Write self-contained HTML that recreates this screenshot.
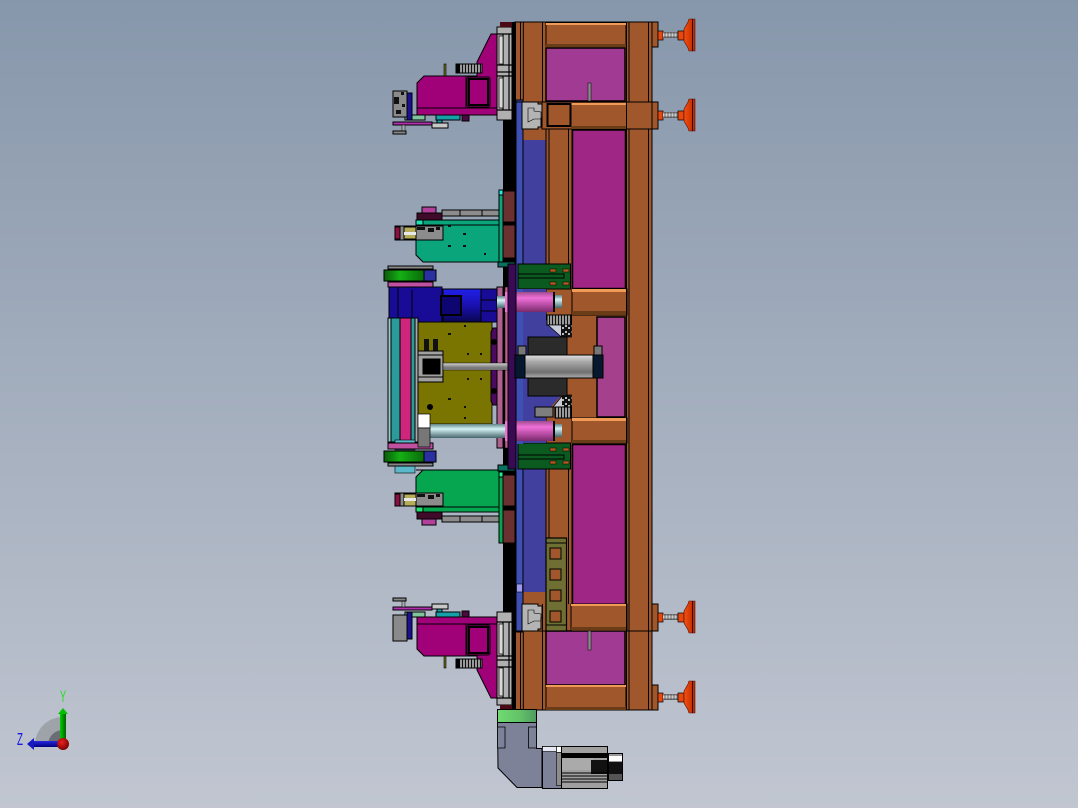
<!DOCTYPE html>
<html><head><meta charset="utf-8"><style>
html,body{margin:0;padding:0;width:1078px;height:808px;overflow:hidden}
svg{display:block}
</style></head><body>
<svg width="1078" height="808" viewBox="0 0 1078 808" xmlns="http://www.w3.org/2000/svg" font-family="Liberation Sans, sans-serif">
<defs>
<linearGradient id="bg" x1="0" y1="0" x2="0" y2="1"><stop offset="0" stop-color="#8797ab"/><stop offset="1" stop-color="#c1c6d1"/></linearGradient>
<linearGradient id="pink" x1="0" y1="0" x2="0" y2="1"><stop offset="0" stop-color="#a04c90"/><stop offset=".3" stop-color="#f070d8"/><stop offset="1" stop-color="#7a2a6c"/></linearGradient>
<linearGradient id="cy" x1="0" y1="0" x2="0" y2="1"><stop offset="0" stop-color="#5f8486"/><stop offset=".35" stop-color="#d4f2f4"/><stop offset="1" stop-color="#46666c"/></linearGradient>
<linearGradient id="blu" x1="0" y1="0" x2="0" y2="1"><stop offset="0" stop-color="#2020e8"/><stop offset=".5" stop-color="#1a10b0"/><stop offset="1" stop-color="#0a0650"/></linearGradient>
<linearGradient id="gry" x1="0" y1="0" x2="0" y2="1"><stop offset="0" stop-color="#e0e0e0"/><stop offset=".3" stop-color="#a8a8a8"/><stop offset=".75" stop-color="#707070"/><stop offset="1" stop-color="#b0b0b0"/></linearGradient>
<linearGradient id="grn" x1="0" y1="0" x2="1" y2="0"><stop offset="0" stop-color="#0a5a0a"/><stop offset=".4" stop-color="#14b014"/><stop offset="1" stop-color="#0a6a0a"/></linearGradient>
<linearGradient id="grb" x1="0" y1="0" x2="1" y2="0"><stop offset="0" stop-color="#6fdc72"/><stop offset=".6" stop-color="#62c068"/><stop offset="1" stop-color="#4f9a60"/></linearGradient>
<linearGradient id="footg" x1="0" y1="0" x2="1" y2="0"><stop offset="0" stop-color="#f4500f"/><stop offset="1" stop-color="#b82800"/></linearGradient>
<linearGradient id="thr" x1="0" y1="0" x2="0" y2="1"><stop offset="0" stop-color="#666"/><stop offset=".5" stop-color="#e4e4e4"/><stop offset="1" stop-color="#555"/></linearGradient>
<linearGradient id="ya" x1="0" y1="0" x2="1" y2="0"><stop offset="0" stop-color="#00d000"/><stop offset="1" stop-color="#006000"/></linearGradient>
<linearGradient id="za" x1="0" y1="0" x2="0" y2="1"><stop offset="0" stop-color="#2828e0"/><stop offset="1" stop-color="#000080"/></linearGradient>
<radialGradient id="ball" cx=".4" cy=".35" r=".7"><stop offset="0" stop-color="#ee2020"/><stop offset="1" stop-color="#700000"/></radialGradient>
<pattern id="chk" width="6" height="6" patternUnits="userSpaceOnUse"><rect width="6" height="6" fill="#111"/><rect x="1" y="1" width="2" height="2" fill="#bbb"/><rect x="4" y="3" width="2" height="2" fill="#bbb"/></pattern>
<pattern id="thd" width="3" height="3" patternUnits="userSpaceOnUse"><rect width="3" height="3" fill="#999"/><rect width="1" height="3" fill="#111"/></pattern>

<g id="footpart">
  <rect x="658" y="-4" width="5" height="9" fill="#e8480f" stroke="#000" stroke-width=".7"/>
  <rect x="663" y="-3" width="15" height="6" fill="url(#thr)"/>
  <path d="M665-3V3M668-3V3M671-3V3M674-3V3M677-3V3" stroke="#333" stroke-width=".6"/>
  <rect x="678" y="-4" width="6" height="9" fill="#e8480f" stroke="#000" stroke-width=".7"/>
  <path d="M684-6 L688-13 L689-16 L695-16 L695 16 L689 16 L688 13 L684 6Z" fill="url(#footg)" stroke="#511" stroke-width=".6"/>
  <rect x="692" y="-16" width="1" height="32" fill="#300"/>
</g>

<g id="half" stroke="#000" stroke-width="1">
  <path d="M477 62 L491 34 L497 34 L497 115 L417 115 L417 83 L424 76 L477 76Z" fill="#a00078"/>
  <path d="M417 108H497M466 76V108" fill="none"/>
  <rect x="467" y="77" width="23" height="30" rx="2" fill="#a00078" stroke-width="1"/>
  <rect x="469" y="79" width="19" height="26" fill="#a00078" stroke-width="2"/>
  <rect x="456" y="64" width="26" height="9" fill="url(#thd)" stroke-width="1"/>
  <rect x="456" y="64" width="4" height="9" fill="#000" stroke="none"/>
  <rect x="444" y="64" width="2" height="12" fill="#6b6b1c" stroke-width=".6"/>
  <rect x="497" y="27" width="15" height="93" fill="#b0b0b0"/>
  <path d="M497 34H512M497 65H512M497 72H512M497 76H512M497 110H512M503 34V65M503 76V110M509 34V110" stroke-width="1.2"/>
  <rect x="499" y="36" width="4" height="28" fill="#d8d8d8" stroke-width=".7"/>
  <rect x="499" y="78" width="4" height="30" fill="#d8d8d8" stroke-width=".7"/>
  <rect x="500" y="22" width="15" height="5" fill="#4a0c14" stroke="none"/>
  <rect x="512" y="22" width="4" height="98" fill="#000" stroke="none"/>
  <rect x="405" y="115" width="20" height="5" fill="#7fc49d"/>
  <rect x="436" y="115" width="24" height="5" fill="#16a0a8"/>
  <rect x="437" y="120" width="5" height="5" fill="#16a0a8"/>
  <rect x="462" y="115" width="7" height="6" fill="#4a0a40"/>
  <rect x="393" y="122" width="39" height="3" fill="#b030b0"/>
  <rect x="432" y="123" width="16" height="5" fill="#c8c8c8"/>
  <rect x="402" y="125" width="3" height="8" fill="#aaa" stroke-width=".5"/>
  <rect x="393" y="131" width="13" height="3" fill="#888"/>
  <rect x="407" y="93" width="5" height="27" fill="#1a1090"/>
  <rect x="393" y="91" width="14" height="26" fill="#8a8a8a"/>
  <rect x="417" y="213" width="25" height="7" fill="#400a2a"/>
  <rect x="422" y="207" width="14" height="6" fill="#b0409a"/>
  <rect x="442" y="210" width="57" height="6" fill="#8c8c8c"/>
  <path d="M460 210V216M482 210V216"/>
</g>
</defs>

<rect width="1078" height="808" fill="url(#bg)"/>

<!-- frame -->
<g stroke="#000" stroke-width="1">
  <rect x="515" y="22" width="137" height="688" fill="#a0572b"/>
  <rect x="652" y="22" width="6" height="25" fill="#a0572b"/>
  <rect x="652" y="102" width="6" height="27" fill="#a0572b"/>
  <rect x="652" y="604" width="6" height="27" fill="#a0572b"/>
  <rect x="652" y="685" width="6" height="25" fill="#a0572b"/>
  <rect x="546" y="48" width="79" height="53" fill="#a03a92" stroke-width="1.5"/>
  <rect x="546" y="631" width="79" height="54" fill="#a03a92" stroke-width="1.5"/>
  <rect x="572.5" y="130" width="53" height="158.5" fill="#a02685" stroke-width="1.5"/>
  <rect x="572.5" y="444.5" width="53" height="160" fill="#a02685" stroke-width="1.5"/>
  <rect x="597" y="317" width="28" height="100" fill="#a5408c" stroke-width="1.5"/>
  <rect x="516" y="140" width="30" height="452" fill="#41409f" stroke="none"/>
  <rect x="516" y="100" width="7" height="532" fill="#3f50b4"/>
  <rect x="516.5" y="584" width="6" height="8" fill="#9a9af0" stroke-width=".6"/>
  <path d="M523 140V592M546 129V603M549 129V289M549 445V538M572 129V289M572 445V604M568.5 129V289M568.5 445V604M520.5 22V100M520.5 632V710M523.3 22V100M523.3 632V710M542.5 22V128M542.5 604V710M629 22V710M648.5 22V710" fill="none"/>
  <path d="M546 22.5H626V46H546ZM546 686H626V709.5H546Z" fill="#a0572b"/>
  <rect x="546" y="23" width="80" height="2" fill="#f09a58" stroke="none"/>
  <rect x="546" y="685" width="80" height="2" fill="#f09a58" stroke="none"/>
  <rect x="546" y="44" width="80" height="3" fill="#6a3c18" stroke="none"/>
  <rect x="546" y="707" width="80" height="3" fill="#6a3c18" stroke="none"/>
  <rect x="542" y="102" width="110" height="27" fill="#a0572b"/>
  <rect x="571" y="103" width="56" height="2" fill="#f09a58" stroke="none"/>
  <rect x="547.5" y="104" width="23" height="22" fill="#a0572b" stroke-width="2"/>
  <rect x="571" y="126" width="56" height="3" fill="#6a3c18" stroke="none"/>
  <rect x="571" y="604" width="56" height="27" fill="#a0572b"/>
  <rect x="571" y="604" width="56" height="2" fill="#f09a58" stroke="none"/>
  <rect x="571" y="627" width="56" height="3" fill="#6a3c18" stroke="none"/>
  <rect x="572" y="289" width="55" height="26" fill="#a0572b"/>
  <rect x="572" y="289" width="55" height="3" fill="#f09a58" stroke="none"/>
  <rect x="572" y="311" width="55" height="4" fill="#6a3c18" stroke="none"/>
  <rect x="572" y="418" width="55" height="25" fill="#a0572b"/>
  <rect x="572" y="418" width="55" height="3" fill="#f09a58" stroke="none"/>
  <rect x="572" y="440" width="55" height="3" fill="#6a3c18" stroke="none"/>
  <path d="M626.5 22V710M652 22V710M515 102H652M515 631H652" fill="none"/>
  <rect x="588" y="83" width="3" height="18" fill="#8a8a8a" stroke-width=".5"/>
  <rect x="588" y="631" width="3" height="19" fill="#8a8a8a" stroke-width=".5"/>
  <rect x="503" y="120" width="13" height="492" fill="#000" stroke="none"/>
  <path d="M522 102H538V104H542V118H541V127H538V129H522Z" fill="#b4b4b4"/>
  <path d="M528 108H534V111L541 112V119H534L528 122Z" fill="none" stroke-width=".6"/>
  <path d="M522 604H538V606H542V618H541V629H538V631H522Z" fill="#b4b4b4"/>
  <path d="M528 610H534V613L541 614V621H534L528 624Z" fill="none" stroke-width=".6"/>
  <rect x="546" y="538" width="20.5" height="93" fill="#6f6f33" stroke-width="1.2"/>
  <path d="M546 543H566.5M546 625H566.5" fill="none"/>
  <rect x="550" y="548" width="11" height="11" fill="#a0572b"/>
  <rect x="550" y="569" width="11" height="11" fill="#a0572b"/>
  <rect x="550" y="590" width="11" height="11" fill="#a0572b"/>
  <rect x="550" y="611" width="11" height="11" fill="#a0572b"/>
</g>

<use href="#footpart" transform="translate(0 35)"/>
<use href="#footpart" transform="translate(0 115)"/>
<use href="#footpart" transform="translate(0 617)"/>
<use href="#footpart" transform="translate(0 697)"/>

<use href="#half"/>
<use href="#half" transform="matrix(1 0 0 -1 0 732)"/>

<g fill="#111">
  <rect x="394" y="97" width="5" height="7"/><rect x="396" y="110" width="5" height="4"/><rect x="401" y="92" width="3" height="3"/><rect x="402" y="104" width="3" height="3"/>
</g>

<!-- green heads -->
<g stroke="#000" stroke-width="1">
  <path d="M416 220H499V262H423L416 255Z" fill="#0ba57b"/>
  <path d="M416 225H499" fill="none"/>
  <rect x="416" y="220" width="7" height="5" fill="#20e0b0"/>
  <path d="M395 226H443V240H395Z" fill="#8c8c8c"/>
  <rect x="395" y="227" width="5" height="12" fill="#8a1040"/>
  <rect x="404" y="227" width="12" height="12" fill="#b5ad5a"/>
  <rect x="404" y="232" width="12" height="3" fill="#e8e8e8" stroke="none"/>
  <g fill="#111" stroke="none">
    <rect x="417" y="227" width="8" height="3"/><rect x="428" y="228" width="6" height="4"/><rect x="436" y="227" width="4" height="3"/>
    <rect x="448" y="225" width="3" height="2"/><rect x="463" y="233" width="3" height="2"/><rect x="448" y="245" width="3" height="2"/><rect x="463" y="245" width="3" height="2"/><rect x="484" y="253" width="2" height="2"/>
    <rect x="448" y="479" width="3" height="2"/><rect x="463" y="487" width="3" height="2"/><rect x="448" y="501" width="3" height="2"/><rect x="463" y="497" width="3" height="2"/>
    <rect x="417" y="494" width="8" height="3"/><rect x="428" y="495" width="6" height="4"/><rect x="436" y="494" width="4" height="3"/>
  </g>
  <rect x="499" y="190" width="4" height="74" fill="#0ba57b"/>
  <rect x="499" y="190" width="4" height="5" fill="#20f0e0"/>
  <rect x="503" y="191" width="12" height="31" fill="#6b3030"/>
  <rect x="503" y="225" width="12" height="33" fill="#6b3030"/>
  <rect x="498" y="262" width="17" height="5" fill="#0a7060"/>
  <path d="M416 470H499V512H416V477L423 470Z" fill="#06a650"/>
  <path d="M416 507H499" fill="none"/>
  <rect x="416" y="507" width="7" height="5" fill="#20e070"/>
  <path d="M395 493H443V506H395Z" fill="#8c8c8c"/>
  <rect x="395" y="494" width="5" height="12" fill="#8a1040"/>
  <rect x="404" y="494" width="12" height="12" fill="#b5ad5a"/>
  <rect x="404" y="498" width="12" height="3" fill="#e8e8e8" stroke="none"/>
  <g fill="#111" stroke="none"><rect x="417" y="494" width="8" height="3"/><rect x="428" y="495" width="6" height="4"/><rect x="436" y="494" width="4" height="3"/></g>
  <rect x="499" y="472" width="4" height="71" fill="#06a650"/>
  <rect x="499" y="472" width="4" height="5" fill="#20f090"/>
  <rect x="503" y="475" width="12" height="31" fill="#6b3030"/>
  <rect x="503" y="510" width="12" height="33" fill="#6b3030"/>
  <rect x="498" y="465" width="17" height="6" fill="#0a7060"/>
</g>

<!-- centre -->
<g stroke="#000" stroke-width="1">
  <rect x="518" y="264" width="52.5" height="25" fill="#0b5b20"/>
  <rect x="518" y="443" width="52.5" height="26" fill="#0b5b20"/>
  <path d="M518 274H564V278H518ZM518 455H564V459H518Z" fill="#0b5b20"/>
  <rect x="550" y="269" width="6" height="3" fill="#b05a20" stroke-width=".5"/><rect x="563" y="269" width="6" height="3" fill="#b05a20" stroke-width=".5"/>
  <rect x="550" y="282" width="6" height="3" fill="#b05a20" stroke-width=".5"/><rect x="563" y="282" width="6" height="3" fill="#b05a20" stroke-width=".5"/>
  <rect x="550" y="448" width="6" height="3" fill="#b05a20" stroke-width=".5"/><rect x="563" y="448" width="6" height="3" fill="#b05a20" stroke-width=".5"/>
  <rect x="550" y="461" width="6" height="3" fill="#b05a20" stroke-width=".5"/><rect x="563" y="461" width="6" height="3" fill="#b05a20" stroke-width=".5"/>
  <path d="M516 289H546V320L562 337V395L546 412V443H516Z" fill="#41409f" stroke="none"/>
  <rect x="516" y="289" width="7" height="155" fill="#3f50b4" stroke="none"/>
  <rect x="547" y="315" width="24.5" height="10" fill="url(#thd)"/>
  <path d="M548 325H571.5V337H561.5Z" fill="#c8ccd8" stroke-width=".7"/>
  <rect x="561" y="325" width="10.5" height="12" fill="url(#chk)" stroke="none"/>
  <path d="M553 407L563 395H571.5V407Z" fill="#c8ccd8" stroke-width=".7"/>
  <rect x="562" y="395" width="9.5" height="12" fill="url(#chk)" stroke="none"/>
  <rect x="555" y="407" width="16.5" height="11" fill="url(#thd)"/>
  <rect x="535" y="407" width="18" height="10" fill="#7e7e7e"/>
  <rect x="528" y="337" width="39" height="59" fill="#2b2b2b"/>
  <rect x="418" y="322" width="74" height="102" fill="#7a7400" stroke-width=".8"/>
  <g fill="#111" stroke="none">
    <rect x="424" y="339" width="5" height="12"/><rect x="433" y="339" width="5" height="12"/>
    <rect x="464" y="325" width="2" height="2"/><rect x="448" y="333" width="3" height="2"/><rect x="467" y="353" width="2" height="2"/><rect x="480" y="353" width="2" height="2"/><rect x="467" y="378" width="2" height="2"/><rect x="480" y="378" width="2" height="2"/><rect x="448" y="398" width="3" height="2"/><rect x="464" y="406" width="2" height="2"/><rect x="464" y="417" width="2" height="2"/>
  </g>
  <path d="M498 328H493L491 332V401L493 405H498Z" fill="#4a0a60"/>
  <circle cx="494" cy="342" r="3" fill="#000" stroke="none"/>
  <circle cx="494" cy="391" r="3" fill="#000" stroke="none"/>
  <circle cx="430" cy="407" r="3" fill="#000" stroke="none"/>
  <rect x="497" y="287" width="6" height="161" fill="#b0608f"/>
  <rect x="503" y="287" width="5" height="162" fill="#000" stroke="none"/>
  <rect x="505" y="287" width="3" height="161" fill="#c05f90" stroke-width=".5"/>
  <rect x="389" y="287" width="53" height="31" fill="#180c96"/>
  <path d="M398 287V318M412 290V322H442V287" fill="#180c96"/>
  <rect x="443" y="289" width="38" height="33" fill="url(#blu)"/>
  <rect x="441" y="296" width="20" height="19" fill="#0d0670" stroke-width="2"/>
  <rect x="481" y="289" width="16" height="33" fill="#180c96"/>
  <path d="M481 300H497M481 311H497" fill="none"/>
  <rect x="388" y="318" width="30" height="124" fill="#9cc8c8"/>
  <rect x="391" y="318" width="9" height="124" fill="#2a9a9a"/>
  <rect x="400" y="318" width="11" height="124" fill="#d0257d"/>
  <rect x="411" y="318" width="4" height="124" fill="#2a9a9a"/>
  <rect x="415" y="318" width="3" height="124" fill="#a8a8a8"/>
  <rect x="395" y="440" width="20" height="10" fill="#5ab8c8" stroke-width=".6"/>
  <rect x="395" y="457" width="20" height="16" fill="#5ab8c8" stroke-width=".6"/>
  <rect x="388" y="266" width="45" height="3" fill="#888"/>
  <rect x="384" y="270" width="40" height="11" fill="url(#grn)"/>
  <rect x="424" y="270" width="12" height="11" fill="#2a30a0"/>
  <rect x="388" y="282" width="45" height="5" fill="#c050a0"/>
  <rect x="384" y="451" width="40" height="11" fill="url(#grn)"/>
  <rect x="424" y="451" width="12" height="11" fill="#2a30a0"/>
  <rect x="388" y="443" width="45" height="6" fill="#c050a0"/>
  <rect x="388" y="463" width="45" height="3" fill="#888"/>
  <rect x="418" y="351" width="25" height="31" fill="#a0a0a0"/>
  <path d="M418 355H443M418 377H443" fill="none"/>
  <rect x="423" y="359" width="17" height="15" fill="#000"/>
  <rect x="443" y="363" width="65" height="7" fill="url(#gry)" stroke-width=".5"/>
  <rect x="497" y="296" width="8" height="12" fill="url(#cy)" stroke="none"/>
  <rect x="516" y="292" width="37" height="20" fill="url(#pink)" stroke="none"/>
  <rect x="505" y="292" width="3" height="20" fill="#f070d8" stroke="none"/>
  <rect x="553" y="295" width="9" height="13" fill="url(#cy)" stroke="none"/>
  <rect x="553" y="292" width="2" height="20" fill="#000" stroke="none"/>
  <rect x="430" y="424" width="75" height="14" fill="url(#cy)" stroke="none"/>
  <rect x="516" y="421" width="37" height="20" fill="url(#pink)" stroke="none"/>
  <rect x="505" y="421" width="3" height="20" fill="#f070d8" stroke="none"/>
  <rect x="553" y="424" width="9" height="13" fill="url(#cy)" stroke="none"/>
  <rect x="553" y="421" width="2" height="20" fill="#000" stroke="none"/>
  <rect x="418" y="414" width="12" height="14" fill="#fff" stroke-width=".7"/>
  <rect x="418" y="428" width="12" height="19" fill="#777" stroke-width=".7"/>
  <rect x="508" y="264" width="8" height="205" fill="#3a0a55"/>
  <rect x="515" y="355" width="10" height="23" fill="#06182e"/>
  <rect x="525" y="355" width="68" height="23" fill="url(#gry)"/>
  <rect x="593" y="355" width="10" height="23" fill="#06182e"/>
  <rect x="518" y="346" width="8" height="9" fill="#777"/>
  <rect x="594" y="346" width="8" height="9" fill="#777"/>
</g>

<!-- servo -->
<g stroke="#000" stroke-width="1">
  <rect x="497.5" y="709.5" width="39" height="13" fill="url(#grb)"/>
  <path d="M497.5 722.5H536.5V748.5H542V787.5H517L498 768Z" fill="#7e8299"/>
  <path d="M497.5 727H505V748H497.5ZM528.5 727H536.5V748H528.5Z" fill="#7e8299" stroke-width=".8"/>
  <rect x="542.5" y="746.5" width="19" height="42" fill="#7e8299"/>
  <rect x="542.5" y="746.5" width="14" height="5" fill="#e6e9f4" stroke-width=".6"/>
  <rect x="556.5" y="746.5" width="5" height="6" fill="#fff" stroke-width=".6"/>
  <rect x="556.5" y="752.5" width="5" height="33" fill="#8c8c8c" stroke-width=".6"/>
  <rect x="561.5" y="746.5" width="46" height="42" fill="#a0a0a0"/>
  <rect x="562" y="753" width="45" height="5" fill="#000" stroke="none"/>
  <rect x="562" y="758" width="31" height="12" fill="#aaa" stroke="none"/>
  <rect x="591" y="760" width="16" height="14" fill="#111" stroke="none"/>
  <path d="M562 773H607M562 776H607M562 779H607M562 782H607" stroke-width="1"/>
  <rect x="608.5" y="753.5" width="14" height="27" fill="#999"/>
  <rect x="609" y="756" width="13" height="5" fill="#fff" stroke="none"/>
  <rect x="609" y="762" width="13" height="12" fill="#111" stroke="none"/>
  <rect x="609" y="774" width="13" height="6" fill="#555" stroke="none"/>
</g>

<!-- triad -->
<path d="M63 745 L35 745 A28 28 0 0 1 63 717Z" fill="#9ea2a9"/>
<path d="M63 745 L48 745 A15 15 0 0 1 63 730Z" fill="#6a6d74"/>
<rect x="60" y="713" width="6" height="30" fill="url(#ya)"/>
<path d="M58 714 L63 708 L68 714Z" fill="#00c000"/>
<rect x="33" y="741" width="30" height="6" fill="url(#za)"/>
<path d="M34 738 L27 744 L34 750Z" fill="#1818c0"/>
<circle cx="63" cy="744" r="6" fill="url(#ball)"/>
<text transform="translate(60 702) scale(.7 1.25)" font-size="13" fill="#20e020">Y</text>
<text transform="translate(17 745) scale(.75 1.35)" font-size="13" fill="#1818e0">Z</text>
</svg>
</body></html>
